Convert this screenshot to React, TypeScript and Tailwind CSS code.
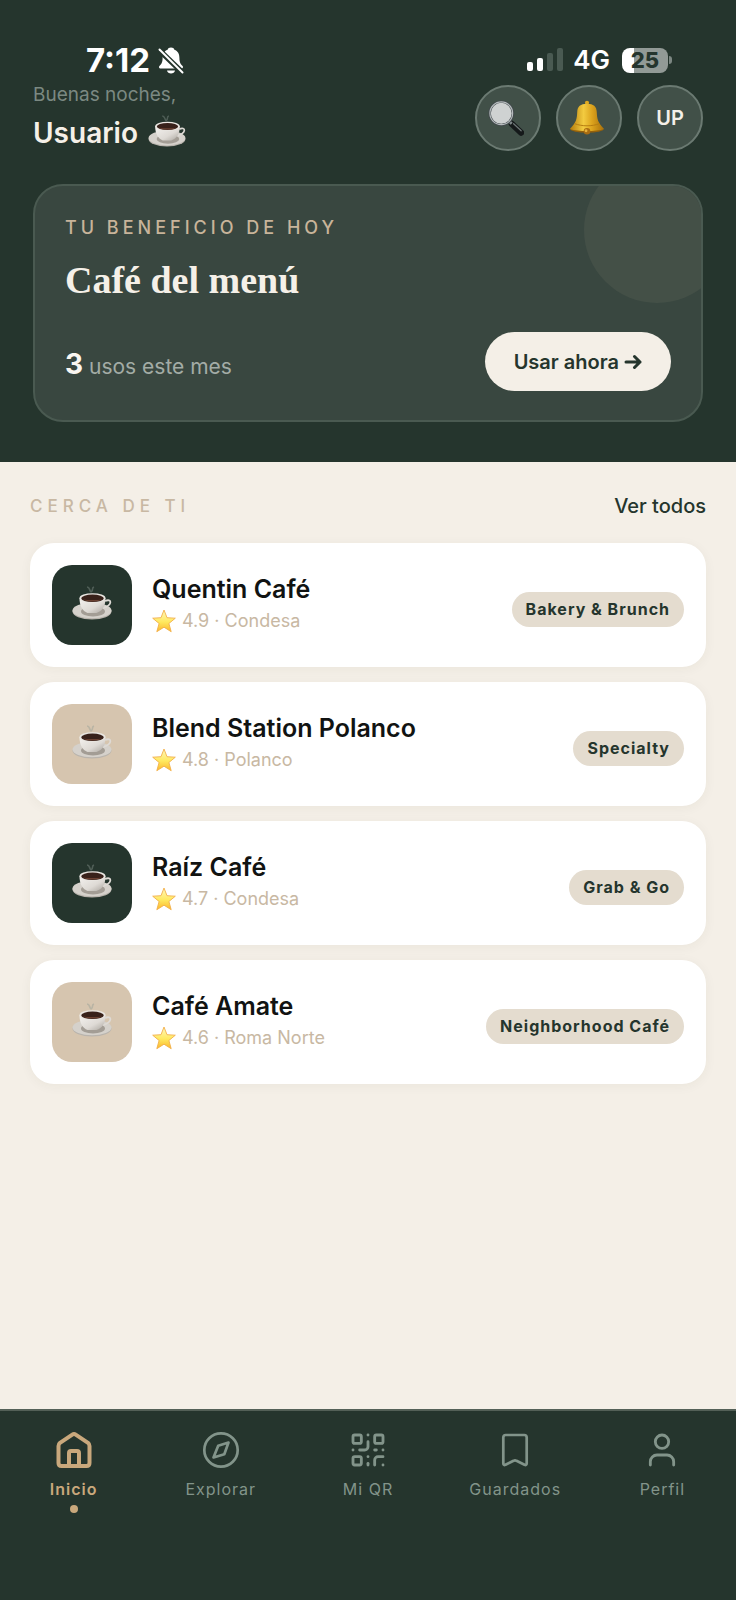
import React from 'react';
import { QrCode, User } from 'lucide-react';

interface Cafe {
  name: string;
  rating: string;
  area: string;
  tag: string;
  dark: boolean;
}

const cafes: Cafe[] = [
  { name: 'Quentin Café', rating: '4.9', area: 'Condesa', tag: 'Bakery & Brunch', dark: true },
  { name: 'Blend Station Polanco', rating: '4.8', area: 'Polanco', tag: 'Specialty', dark: false },
  { name: 'Raíz Café', rating: '4.7', area: 'Condesa', tag: 'Grab & Go', dark: true },
  { name: 'Café Amate', rating: '4.6', area: 'Roma Norte', tag: 'Neighborhood Café', dark: false }
];

const CoffeeIcon: React.FC<{ className?: string }> = ({ className }) => (
  <svg viewBox="0 0 40 36" className={className} aria-hidden="true">
    <defs>
      <linearGradient id="cup" x1="0" x2="1" y1="0" y2="1">
        <stop offset="0" stopColor="#f4f2ef" />
        <stop offset="0.6" stopColor="#dedad5" />
        <stop offset="1" stopColor="#a9a49d" />
      </linearGradient>
    </defs>
    <path d="M15 2c3 0 2 3 4 5M22 2c-3 1 0 3-3 5" fill="none" stroke="#8f9a94" strokeOpacity="0.4" strokeWidth="1.6" />
    <ellipse cx="20" cy="26.500" rx="19.500" ry="8" fill="#b9b4ad" />
    <ellipse cx="20" cy="25.500" rx="19.500" ry="7.800" fill="#d5d1cb" />
    <ellipse cx="21" cy="26.500" rx="12" ry="5" fill="#a39d95" />
    <path d="M33 16c7-3 8 4-2 7" fill="none" stroke="#dedad5" strokeWidth="1.8" />
    <path d="M7.500 13c0 8 3 13 8 15h9c6-2 9-7 9-15z" fill="url(#cup)" />
    <ellipse cx="20.500" cy="13" rx="13" ry="4.800" fill="#e9e6e1" />
    <ellipse cx="20.500" cy="13.300" rx="11.300" ry="3.700" fill="#38211a" />
    <path d="M11 14.500c4 2.600 15 2.600 19 0-4 .8-15 .8-19 0z" fill="#6b4132" />
  </svg>
);

const StarIcon = () => (
  <svg viewBox="0 0 24 24" className="size-6 shrink-0" aria-hidden="true">
    <defs>
      <linearGradient id="star" x1="0" x2="0" y1="0" y2="1">
        <stop offset="0" stopColor="#fff7c0" />
        <stop offset="0.55" stopColor="#ffe95e" />
        <stop offset="1" stopColor="#fbb62c" />
      </linearGradient>
    </defs>
    <path
      d="M12 1l3 7.700 8.300.5-6.400 5.300 2.300 8.200-7.200-4.500-7.200 4.500 2.300-8.200L.7 9.200 9 8.700z"
      fill="url(#star)"
      stroke="#f2b04a"
      strokeWidth="0.9"
      strokeLinejoin="round"
    />
  </svg>
);

const MagnifierIcon = () => (
  <svg viewBox="0 0 38 38" className="mr-1 size-9" aria-hidden="true">
    <path d="M25 25l10 9.500" stroke="#15191a" strokeWidth="6.500" strokeLinecap="round" />
    <path d="M27 25l8 7.500" stroke="#6d7676" strokeWidth="1.300" strokeLinecap="round" />
    <path d="M21 21l4 4" stroke="#7f888a" strokeWidth="3" />
    <circle cx="14" cy="14" r="12.300" fill="#cfd2d2" stroke="#42494c" strokeWidth="2.600" />
    <circle cx="14" cy="14" r="12" fill="none" stroke="#b5bbbd" strokeWidth="1.200" />
  </svg>
);

const BellIcon = () => (
  <svg viewBox="0 0 38 38" className="mr-1 size-9" aria-hidden="true">
    <defs>
      <linearGradient id="bell" x1="0" x2="1" y1="0" y2="0">
        <stop offset="0" stopColor="#b57c0c" />
        <stop offset="0.4" stopColor="#f3cb40" />
        <stop offset="0.65" stopColor="#dca31d" />
        <stop offset="1" stopColor="#a8700a" />
      </linearGradient>
    </defs>
    <circle cx="19" cy="3" r="2.200" fill="#e0a921" />
    <ellipse cx="19" cy="31" rx="17.500" ry="3.500" fill="#94610c" />
    <path d="M19 4c7 0 10 3 10.300 8.500.4 8 1 11 7.700 18-8 3-28 3-36 0 6.700-7 7.300-10 7.700-18C9 7 12 4 19 4z" fill="url(#bell)" />
    <path d="M6 25c8 3 18 3 26 0" fill="none" stroke="#b47b10" strokeWidth="1" />
    <circle cx="19" cy="33" r="3.500" fill="#a86c12" />
    <circle cx="18" cy="32.500" r="1.500" fill="#e9b13b" />
  </svg>
);

const MutedIcon = () => (
  <svg viewBox="0 0 26 27" className="h-[27px] w-[26px]" aria-hidden="true">
    <path d="M13 .5c1.800 0 3 .9 3.400 2.200 3.600 1.300 5 4.300 5 8 0 4.500 1 6.200 3.200 8.300.8.800.4 2.500-1 2.500h-21.200c-1.400 0-1.800-1.700-1-2.500 2.200-2.100 3.200-3.800 3.200-8.300 0-3.700 1.400-6.700 5-8C10 1.400 11.200.5 13 .5z" fill="#fff" />
    <path d="M9 23.500h8c-.5 3.900-7.500 3.900-8 0z" fill="#fff" />
    <path d="M.5 2.500l24 23" stroke="#25352d" strokeWidth="5.500" />
    <path d="M1.500 2.500l23 23" stroke="#fff" strokeWidth="2" strokeLinecap="round" />
  </svg>
);

const SignalIcon = () => (
  <svg viewBox="0 0 36 24" className="h-6 w-9" aria-hidden="true">
    <rect x="0" y="14" width="6" height="9" rx="2" fill="#fff" />
    <rect x="10" y="10" width="6" height="13" rx="2" fill="#fff" />
    <rect x="20" y="5" width="6" height="18" rx="2" fill="#4a5a52" />
    <rect x="30" y="0" width="6" height="23" rx="2" fill="#4a5a52" />
  </svg>
);

const HomeIcon = () => (
  <svg viewBox="0 0 40 40" className="size-10" fill="none" stroke="currentColor" strokeWidth="4" strokeLinejoin="round" aria-hidden="true">
    <path d="M4.500 16c0-1.500.4-2.300 1.500-3.200L18.300 4.600c1.200-.9 2.200-.9 3.400 0L34 12.800c1.100.9 1.500 1.700 1.500 3.200V33c0 2-1 3-3 3h-25c-2 0-3-1-3-3z" />
    <path d="M15 36V23c0-1.300.7-2 2-2h6c1.300 0 2 .7 2 2v13" />
  </svg>
);

const ExploreIcon = () => (
  <svg viewBox="0 0 40 40" className="size-10" fill="none" stroke="currentColor" strokeWidth="2.700" strokeLinejoin="round" aria-hidden="true">
    <circle cx="20" cy="20" r="16.700" />
    <path d="M27.500 12.500l-10.300 3.200-4.700 11.800 10.800-3.200z" />
  </svg>
);

const SavedIcon = () => (
  <svg viewBox="0 0 40 40" className="size-10" fill="none" stroke="currentColor" strokeWidth="2.700" strokeLinejoin="round" aria-hidden="true">
    <path d="M8.300 33.500V7.500c0-1.600.9-2.500 2.500-2.500h18.400c1.600 0 2.500.9 2.500 2.500v26c0 1.400-1 1.900-2.200 1.200L21.500 30.800c-1-.6-2-.6-3 0l-8 3.900c-1.200.7-2.200.2-2.200-1.200z" />
  </svg>
);

const navItems = [
  { label: 'Inicio', icon: <HomeIcon />, active: true },
  { label: 'Explorar', icon: <ExploreIcon />, active: false },
  { label: 'Mi QR', icon: <QrCode className="size-10" strokeWidth={1.7} />, active: false },
  { label: 'Guardados', icon: <SavedIcon />, active: false },
  { label: 'Perfil', icon: <User className="size-10" strokeWidth={1.7} />, active: false }
];

const roundButton =
  'flex size-[66px] items-center justify-center rounded-full border-2 border-[#6b7a72] bg-[#415048]';

const StatusBar = () => (
  <div className="flex h-8 items-center justify-between pr-16 pl-[86px] text-white">
    <div className="flex items-center gap-2">
      <span className="text-[33px] leading-8 font-bold">7:12</span>
      <MutedIcon />
    </div>
    <div className="flex items-center">
      <SignalIcon />
      <span className="ml-[10px] text-[26px] leading-8 font-semibold">4G</span>
      <span className="ml-3 flex h-[25px] w-[46px] items-center justify-center rounded-lg bg-linear-to-r from-white from-25% to-[#929a96] to-25% text-[22px] leading-6 font-extrabold text-[#25352d]">
        25
      </span>
      <span className="ml-px h-2 w-[3px] rounded-r-full bg-[#7c8782]" />
    </div>
  </div>
);

const BenefitCard = () => (
  <section className="relative mt-8 overflow-hidden rounded-[30px] border-2 border-[#4a5a51] bg-[#394740] px-[30px] pt-[30px] pb-[29px]">
    <div className="absolute -top-[29px] -right-[29px] size-[146px] rounded-full bg-[#445047]" />
    <p className="text-lg leading-6 font-medium tracking-[4px] text-[#c8b49a]">TU BENEFICIO DE HOY</p>
    <h2 className="mt-3 font-['Liberation_Serif',serif] text-[38px] leading-[56px] font-bold text-[#f5f0e8]">
      Café del menú
    </h2>
    <div className="mt-6 flex items-center justify-between">
      <p className="pt-2 text-[21px] leading-8 text-[#a3aca6]">
        <strong className="text-[28px] font-bold text-[#f9f6f1]">3</strong> usos este mes
      </p>
      <button className="h-[59px] rounded-full bg-[#f4efe7] px-[29px] text-xl font-semibold text-[#25352d]">
        Usar ahora{' '}
        <svg viewBox="0 0 18 16" className="inline h-4 w-[18px] align-[-1px]" fill="none" stroke="currentColor" strokeWidth="3" strokeLinecap="round" strokeLinejoin="round" aria-hidden="true">
          <path d="M2 8h14M10.500 2.500L16 8l-5.500 5.500" />
        </svg>
      </button>
    </div>
  </section>
);

const CafeCard: React.FC<{ cafe: Cafe }> = ({ cafe }) => (
  <li className="flex items-center rounded-3xl bg-white p-[22px] shadow-[0_2px_12px_rgba(60,50,20,0.05)]">
    <div
      className={`flex size-20 shrink-0 items-center justify-center rounded-[20px] ${
        cafe.dark ? 'bg-[#25352d]' : 'bg-[#d6c5af]'
      }`}
    >
      <CoffeeIcon className="mb-1 h-9 w-10" />
    </div>
    <div className="ml-5 min-w-0 flex-1">
      <h3 className="text-[25px] leading-8 font-semibold text-[#111312]">{cafe.name}</h3>
      <p className="flex items-center gap-[6px] text-lg leading-8 text-[#c8b8a3]">
        <StarIcon />
        {cafe.rating} · {cafe.area}
      </p>
    </div>
    <span className="mt-2 rounded-full bg-[#e4dccf] px-[14px] text-base leading-[35px] font-bold tracking-[1px] text-[#25352d]">
      {cafe.tag}
    </span>
  </li>
);

const App: React.FC = () => {
  return (
    <div className="flex min-h-screen flex-col bg-[#f4efe7] font-[Inter,sans-serif]">
      {/* Header */}
      <header className="bg-[#25352d] pt-11 pb-10">
        <StatusBar />
        <div className="px-[33px]">
          <div className="mt-[9px] flex items-start justify-between">
            <div>
              <p className="text-[19px] leading-5 text-[#7b8982]">Buenas noches,</p>
              <h1 className="mt-[9px] flex items-center gap-[10px] text-[28px] leading-9 font-semibold text-[#f5f0e8]">
                Usuario
                <CoffeeIcon className="mb-1 h-[34px] w-[38px]" />
              </h1>
            </div>
            <div className="flex gap-[15px]">
              <button className={roundButton} aria-label="Buscar">
                <MagnifierIcon />
              </button>
              <button className={roundButton} aria-label="Notificaciones">
                <BellIcon />
              </button>
              <button className={`${roundButton} text-xl font-semibold text-[#f5f0e8]`}>UP</button>
            </div>
          </div>
          <BenefitCard />
        </div>
      </header>

      {/* Nearby */}
      <main className="flex-1 px-[30px] pt-7 pb-8">
        <div className="flex items-center justify-between leading-8">
          <h2 className="text-[17px] leading-8 font-medium tracking-[5px] text-[#c8b8a3]">CERCA DE TI</h2>
          <a href="#todos" className="text-xl leading-8 font-medium text-[#25352d]">
            Ver todos
          </a>
        </div>
        <ul className="mt-[21px] flex flex-col gap-[15px]">
          {cafes.map((cafe) => (
            <CafeCard key={cafe.name} cafe={cafe} />
          ))}
        </ul>
      </main>

      {/* Bottom navigation */}
      <nav className="grid grid-cols-5 border-t-2 border-[#536057] bg-[#25352d] pt-[19px] pb-[87px]">
        {navItems.map((item) => (
          <a
            key={item.label}
            href={`#${item.label}`}
            className={`flex flex-col items-center ${item.active ? 'text-[#c9a87c]' : 'text-[#82948a]'}`}
          >
            {item.icon}
            <span className={`mt-[7px] text-base leading-6 tracking-[1px] ${item.active ? 'font-semibold' : 'font-normal'}`}>
              {item.label}
            </span>
            {item.active && <span className="mt-1 size-2 rounded-full bg-[#c9a87c]" />}
          </a>
        ))}
      </nav>
    </div>
  );
};

export default App;
